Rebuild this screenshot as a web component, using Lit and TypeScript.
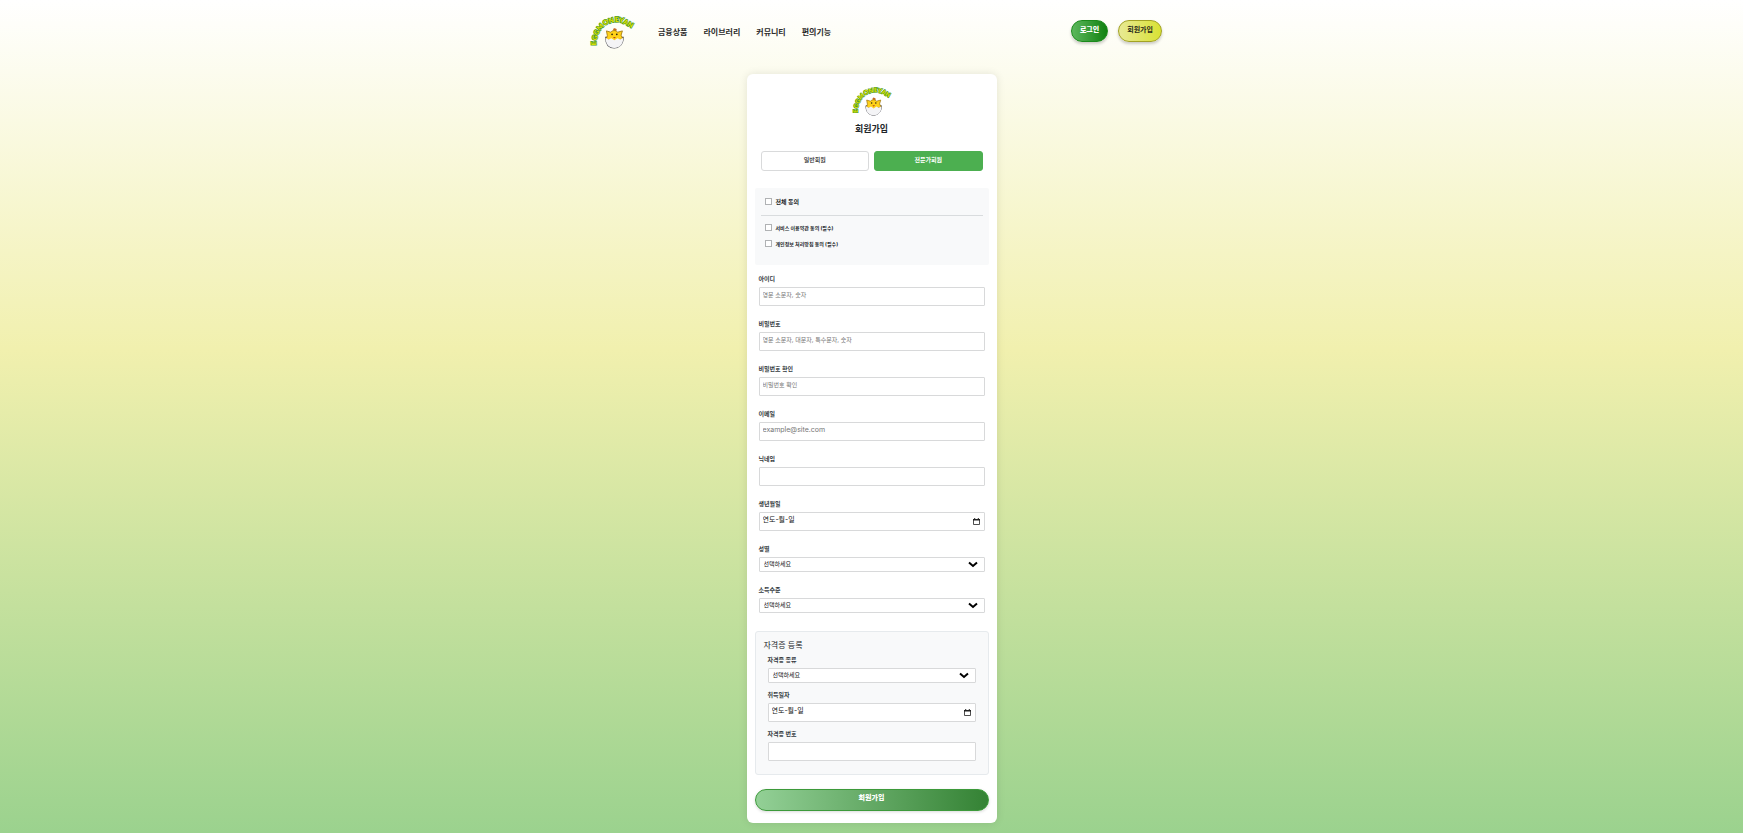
import { LitElement, html, css, svg } from "lit";
import { customElement, property, state } from "lit/decorators.js";

const ARC_LETTERS = [
  ["E", 5, 33, -92], ["G", 6, 27, -76], ["G", 8, 21, -62], ["M", 12, 15, -48], ["O", 18, 10, -32],
  ["N", 24, 8, -16], ["E", 30, 7, -4], ["Y", 35, 8, 10], ["A", 40, 10, 22], ["N", 45, 13, 30],
] as const;

@customElement("egg-logo")
export class EggLogo extends LitElement {
  static styles = css`
    :host { display: block; }
    svg { display: block; width: 100%; height: auto; overflow: visible; }
    .arc { font: 900 8px "Lato", "Liberation Sans", sans-serif; fill: #dfe000; stroke: #4c9a2a; stroke-width: 1.6px; paint-order: stroke; text-anchor: middle; }
  `;
  render() {
    return html`<svg viewBox="0 0 50 39" role="img" aria-label="EGGMONEYAN">
      ${ARC_LETTERS.map(([c, x, y, r]) => svg`<text class="arc" transform="translate(${x} ${y}) rotate(${r})" y="1">${c}</text>`)}
      <path d="M17 26c0 8 4 12.300 10 12.300s10.500-4.300 10.500-12.300z" fill="#f4f4f6" stroke="#55555c" stroke-width="1.300"/>
      <path d="M26 18c-1-2 1-3 1-3 1 1 2 0 3 2l-1 2z" fill="#c56a22"/>
      <path d="M18 18.500l5 1.500c2-2.500 6-2.500 8 0l5.500-1.500-1.500 5 2 4.500-5 .500-4.500 2.500-5-2.500-5 .500 1.500-5z" fill="#ffd21a" stroke="#a37811" stroke-width="1"/>
      <circle cx="24.500" cy="22.500" r="1" fill="#2c2410"/><circle cx="30" cy="22.500" r="1" fill="#2c2410"/>
      <path d="M25.500 25.500h3.500l-1.700 1.800z" fill="#b8471b"/>
      <path d="M17 26.500l3.500 2 3.200-1.500 3.500 2.500 3.500-2.500 3.300 1.500 3.500-2c0 8-4.500 11.800-10.300 11.800s-10.200-3.800-10.200-11.800z" fill="#f4f4f6"/>
    </svg>`;
  }
}

const controls = css`
  .label { display: block; font-size: 6px; line-height: 8px; font-weight: 700; color: #333a40; margin-bottom: 4px; }
  .box {
    display: flex; align-items: center; box-sizing: border-box; width: 100%; height: 19px;
    border: 1px solid #d8d9da; border-radius: 1px; background: #fff;
  }
  .input {
    flex: 1; min-width: 0; box-sizing: border-box; border: 0; outline: 0; background: none;
    padding: 0 3px 2px; font: 400 6px/12px var(--font); color: #222;
  }
  .input::placeholder { color: #757575; opacity: 1; }
  .latin, .date { font-size: 7px; }
  .date::placeholder { color: #111; }
  .picker { border: 0; background: none; padding: 0 4px 0 0; display: flex; }
  .select-box { position: relative; height: 15px; }
  .select {
    appearance: none; width: 100%; height: 100%; border: 0; outline: 0; background: none;
    padding: 0 20px 0 4px; font: 400 6px/12px var(--font); color: #111;
  }
  .chevron { position: absolute; right: 6px; top: 3px; pointer-events: none; }
`;

@customElement("form-field")
export class FormField extends LitElement {
  @property() label = "";
  @property() kind = "text";
  @property() hint = "";
  static styles = [controls, css`:host { display: block; }`];

  private control() {
    if (this.kind === "select") {
      return html`<div class="box select-box">
        <select class="select" id="control"><option>선택하세요</option></select>
        <svg class="chevron" width="10" height="7" viewBox="0 0 10 7" aria-hidden="true"><path d="M1 1.500l4 3.500 4-3.500" fill="none" stroke="#000" stroke-width="2"/></svg>
      </div>`;
    }
    if (this.kind === "date") {
      return html`<div class="box">
        <input class="input date" id="control" type="text" placeholder="연도-월-일" />
        <button class="picker" type="button" aria-label="날짜 선택">
          <svg width="7" height="7" viewBox="0 0 7 7"><path d="M.5 1.500h6v5h-6z" fill="none" stroke="#222" stroke-width=".8"/><path d="M0 1h7v1.500H0zM1.200 0h1v1h-1zM4.800 0h1v1h-1z" fill="#222"/></svg>
        </button>
      </div>`;
    }
    return html`<div class="box">
      <input class="input ${this.kind === "email" ? "latin" : ""}" id="control" type=${this.kind} placeholder=${this.hint} />
    </div>`;
  }

  render() {
    return html`<label class="label" for="control">${this.label}</label>${this.control()}`;
  }
}

@customElement("app-root")
export class AppRoot extends LitElement {
  @state() private member = "전문가회원";

  static styles = css`
    :host {
      --font: "Inter", "Noto Sans CJK KR", sans-serif;
      display: block; box-sizing: border-box; min-height: 100vh; padding-bottom: 10px;
      font-family: var(--font); color: #212529;
      background: linear-gradient(to bottom, #fff 0%, #f1f0ae 42%, #9bd28e 100%);
    }
    .header { display: flex; align-items: center; box-sizing: border-box; max-width: 581px; height: 64px; margin: 0 auto; padding-left: 10px; }
    .header-logo { width: 43px; }
    .nav { display: flex; gap: 16px; margin-left: 24px; }
    .nav a { font-size: 8px; line-height: 12px; font-weight: 700; color: #2b2b2b; text-decoration: none; }
    .actions { display: flex; gap: 10px; margin-left: auto; padding-bottom: 3px; }
    .pill {
      box-sizing: border-box; height: 22px; border-radius: 11px; padding: 0 8px 2px; font: 700 7px/12px var(--font);
      box-shadow: 0 2px 3px rgba(0, 0, 0, .2);
    }
    .login { border: 1px solid #1b8a1b; background: linear-gradient(90deg, #5cb85c, #108010); color: #fff; font-weight: 900; }
    .join { border: 1px solid #a2a224; background: linear-gradient(90deg, #e8e994, #d9e234); color: #2a2a1a; }
    .card {
      box-sizing: border-box; width: 250px; margin: 10px auto 0; padding: 12px 8px; border-radius: 6px;
      background: #fff; box-shadow: 0 0 8px rgba(0, 0, 0, .1);
    }
    .card-logo { width: 38px; margin: 0 auto; }
    .title { margin: 6px 0 0; text-align: center; font-size: 9px; line-height: 14px; font-weight: 700; }
    .tabs { display: grid; grid-template-columns: 1fr 1fr; gap: 5px; margin: 15px 6px 0; }
    .tab {
      height: 20px; border: 1px solid #d9dadb; border-radius: 3px; background: #fff; padding: 0 0 2px;
      font: 500 6px/12px var(--font); color: #222;
    }
    .tab.on { border-color: #4caf50; background: #4caf50; color: #fff; font-weight: 700; }
    .terms { margin-top: 17px; padding: 10px 6px 9px; border-radius: 2px; background: #f8f9fa; }
    .term { display: flex; align-items: center; gap: 4px; height: 8px; padding-left: 4px; margin-bottom: 8px; font-size: 5px; font-weight: 700; }
    .term label { line-height: 8px; }
    .term input { appearance: none; box-sizing: border-box; width: 7px; height: 7px; margin: 0; border: 1px solid #b0b2b4; background: #fff; }
    .term input:checked { background: #4caf50; }
    .all { font-size: 6px; padding-bottom: 9px; border-bottom: 1px solid #d9dcde; }
    .fields { display: grid; gap: 14px; margin: 10px 4px 0; }
    .cert { margin-top: 18px; padding: 7px 12px 13px; border: 1px solid #e6eaed; border-radius: 3px; background: #f8f9fa; }
    .cert-title { margin: 0 0 5px -4px; font-size: 8px; line-height: 12px; font-weight: 400; }
    .cert-fields { display: grid; gap: 8px; }
    .submit {
      display: block; width: 100%; height: 22px; margin-top: 14px; border: 1px solid #3c9a3a; border-radius: 11px;
      padding: 0 0 3px; background: linear-gradient(90deg, #93d096, #348234); color: #fff;
      font: 900 7px/12px var(--font); box-shadow: 0 1px 3px rgba(0, 0, 0, .15);
    }
  `;

  render() {
    return html`
      <header class="header">
        <egg-logo class="header-logo"></egg-logo>
        <nav class="nav">
          ${["금융상품", "라이브러리", "커뮤니티", "편의기능"].map((t) => html`<a href="#">${t}</a>`)}
        </nav>
        <div class="actions">
          <button class="pill login">로그인</button>
          <button class="pill join">회원가입</button>
        </div>
      </header>
      <main class="card">
        <egg-logo class="card-logo"></egg-logo>
        <h1 class="title">회원가입</h1>
        <div class="tabs">
          ${["일반회원", "전문가회원"].map((t) => html`<button class="tab ${this.member === t ? "on" : ""}" @click=${() => (this.member = t)}>${t}</button>`)}
        </div>
        <section class="terms">
          <div class="term all"><input type="checkbox" id="all" /><label for="all">전체 동의</label></div>
          <div class="term"><input type="checkbox" id="service" /><label for="service">서비스 이용약관 동의 (필수)</label></div>
          <div class="term"><input type="checkbox" id="privacy" /><label for="privacy">개인정보 처리방침 동의 (필수)</label></div>
        </section>
        <div class="fields">
          <form-field label="아이디" hint="영문 소문자, 숫자"></form-field>
          <form-field label="비밀번호" kind="password" hint="영문 소문자, 대문자, 특수문자, 숫자"></form-field>
          <form-field label="비밀번호 확인" kind="password" hint="비밀번호 확인"></form-field>
          <form-field label="이메일" kind="email" hint="example@site.com"></form-field>
          <form-field label="닉네임"></form-field>
          <form-field label="생년월일" kind="date"></form-field>
          <form-field label="성별" kind="select"></form-field>
          <form-field label="소득수준" kind="select"></form-field>
        </div>
        <section class="cert">
          <h2 class="cert-title">자격증 등록</h2>
          <div class="cert-fields">
            <form-field label="자격증 종류" kind="select"></form-field>
            <form-field label="취득일자" kind="date"></form-field>
            <form-field label="자격증 번호"></form-field>
          </div>
        </section>
        <button class="submit">회원가입</button>
      </main>
    `;
  }
}
